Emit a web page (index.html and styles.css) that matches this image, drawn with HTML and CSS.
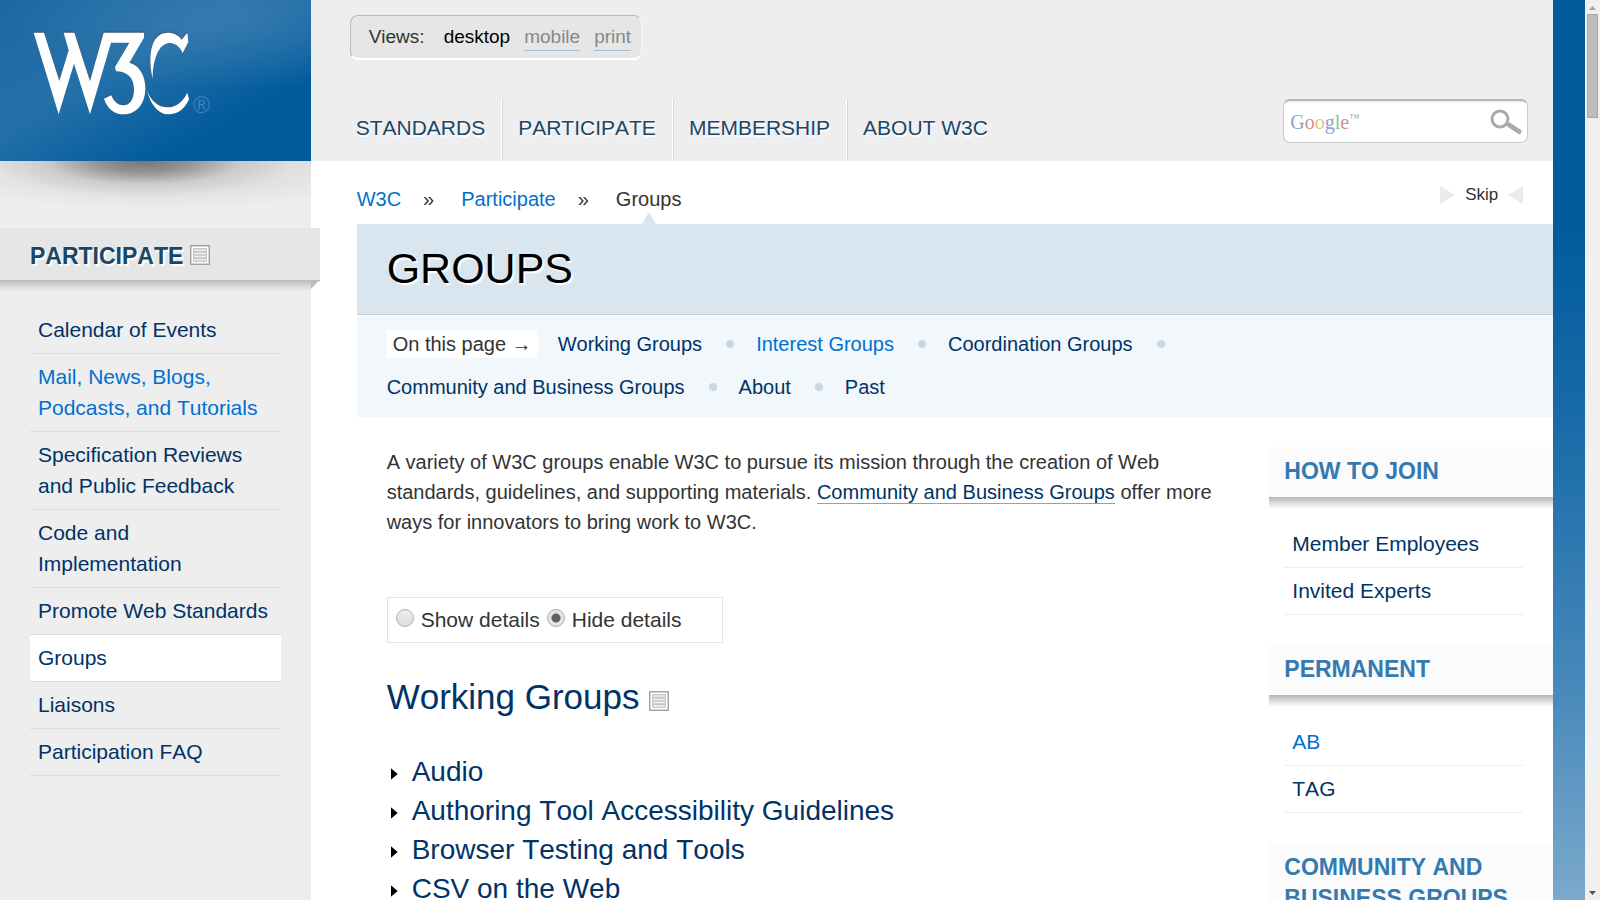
FILE: index.html
```html
<!DOCTYPE html>
<html lang="en">
<head>
<meta charset="utf-8">
<title>Groups - W3C</title>
<link rel="stylesheet" href="styles.css">
</head>
<body>
<svg class="defs" aria-hidden="true">
  <symbol id="doc" viewBox="0 0 20 20">
    <rect x="0.75" y="0.75" width="18.500" height="18.500" fill="#fff" stroke="#999" stroke-width="1.3"/>
    <rect x="3" y="3" width="14" height="14" rx="1" fill="#c6c6c6"/>
    <path d="M4 5h12M4 8.500h12M4 11.500h12M4 15h12" stroke="#f0f0f0" stroke-width="1.5"/>
  </symbol>
</svg>
<div class="viewport">
  <div class="page">
    <div class="side">
      <a class="brand" href="#" aria-label="W3C">
        <svg class="logo" viewBox="96 89 540 258" aria-hidden="true">
          <g class="logo-shape">
            <path d="M101 97H132L178 242L206 150L191 97H223L270 243L311 97H432V112L388 187C418 195 436 225 436 264C436 310 410 342 372 342C344 342 322 326 312 295L334 285C342 305 354 315 370 315C390 315 402 295 402 268C402 232 382 213 348 213L345 200L388 127H333L270 342L222 190L176 342Z"/>
            <path d="M458 235C440 150 460 97 503 97C522 97 536 105 545 118L562 97L565 125L548 158C538 135 522 128 508 128C475 130 458 180 458 235Z"/>
            <path d="M441 268C450 300 475 321 503 321C530 321 550 302 562 277L567 297C555 325 535 342 505 342C475 342 450 310 441 268Z"/>
          </g>
        </svg>
        <span class="reg">®</span>
      </a>
      <div class="brand-shadow"></div>
      <h2 class="side-title"><a href="#">PARTICIPATE</a> <svg class="doc"><use href="#doc"/></svg></h2>
      <ul class="links side-links">
        <li><a href="#">Calendar of Events</a></li>
        <li><a class="fresh" href="#">Mail, News, Blogs, Podcasts, and Tutorials</a></li>
        <li><a href="#">Specification Reviews and Public Feedback</a></li>
        <li><a href="#">Code and Implementation</a></li>
        <li><a href="#">Promote Web Standards</a></li>
        <li class="current"><a href="#">Groups</a></li>
        <li><a href="#">Liaisons</a></li>
        <li><a href="#">Participation FAQ</a></li>
      </ul>
    </div>
    <div class="content">
      <header class="top">
        <div class="views"><span>Views:</span><a class="on" href="#">desktop</a><a href="#">mobile</a><a href="#">print</a></div>
        <div class="bar">
          <nav class="menu">
            <a href="#">STANDARDS</a><a href="#">PARTICIPATE</a><a href="#">MEMBERSHIP</a><a href="#">ABOUT W3C</a>
          </nav>
          <form class="search">
            <label class="google" for="q"><b class="g-blue">G</b><b class="g-red">o</b><b class="g-gold">o</b><b class="g-blue">g</b><b class="g-green">l</b><b class="g-red">e</b><sup>™</sup></label>
            <input id="q" type="text">
            <button type="button" aria-label="Search">
              <svg viewBox="0 0 32 26"><circle cx="10" cy="10" r="8" fill="none" stroke="#aaa" stroke-width="3"/><path d="M16 14.500L20 17" stroke="#aaa" stroke-width="3"/><path d="M20 16.500L29 22.500" stroke="#aaa" stroke-width="5" stroke-linecap="round"/></svg>
            </button>
          </form>
        </div>
      </header>
      <div class="trail">
        <nav class="crumbs"><a href="#">W3C</a><i>»</i><a href="#">Participate</a><i>»</i><span>Groups</span></nav>
        <a class="skip" href="#main"><svg viewBox="0 0 15 18"><path d="M0 0L15 9L0 18Z" fill="#ebebeb"/></svg>Skip<svg viewBox="0 0 15 18"><path d="M15 0L0 9L15 18Z" fill="#ebebeb"/></svg></a>
      </div>
      <div class="inner">
        <h1>GROUPS</h1>
        <ul class="jump">
          <li class="label">On this page →</li>
          <li><a href="#">Working Groups</a></li>
          <li><a class="fresh" href="#">Interest Groups</a></li>
          <li><a href="#">Coordination Groups</a></li>
          <li><a href="#">Community and Business Groups</a></li>
          <li><a href="#">About</a></li>
          <li class="last"><a href="#">Past</a></li>
        </ul>
        <div class="columns">
          <main id="main">
            <p>A variety of W3C groups enable W3C to pursue its mission through the creation of Web standards, guidelines, and supporting materials. <a href="#">Community and Business Groups</a> offer more ways for innovators to bring work to W3C.</p>
            <form class="toggle">
              <input type="radio" name="d" id="show"><label for="show">Show details</label>
              <input type="radio" name="d" id="hide" checked><label for="hide">Hide details</label>
            </form>
            <h2 class="section"><a href="#">Working Groups</a> <svg class="doc"><use href="#doc"/></svg></h2>
            <ul class="groups">
              <li><a href="#">Audio</a></li>
              <li><a href="#">Authoring Tool Accessibility Guidelines</a></li>
              <li><a href="#">Browser Testing and Tools</a></li>
              <li><a href="#">CSV on the Web</a></li>
            </ul>
          </main>
          <aside>
            <h2>HOW TO JOIN</h2>
            <ul class="links">
              <li><a href="#">Member Employees</a></li>
              <li><a href="#">Invited Experts</a></li>
            </ul>
            <h2>PERMANENT</h2>
            <ul class="links">
              <li><a class="fresh" href="#">AB</a></li>
              <li><a href="#">TAG</a></li>
            </ul>
            <h2>COMMUNITY AND BUSINESS GROUPS</h2>
          </aside>
        </div>
      </div>
    </div>
  </div>
</div>
<div class="scroll" aria-hidden="true">
  <svg viewBox="0 0 7 4"><path d="M0 4L3.500 0L7 4Z" fill="#a3a3a3"/></svg>
  <div class="thumb"></div>
  <svg viewBox="0 0 7 4"><path d="M0 0L3.500 4L7 0Z" fill="#505050"/></svg>
</div>
</body>
</html>
```
FILE: styles.css
```css
* { box-sizing: border-box; }
body {
  margin: 0;
  display: flex;
  height: 100vh;
  overflow: hidden;
  font-family: "Liberation Sans", Arial, sans-serif;
  font-size: 20px;
  font-kerning: none;
  line-height: 30px;
  color: #333;
}
h1, h2, p, ul { margin: 0; padding: 0; }
ul { list-style: none; }
a { color: #036; text-decoration: none; }
a.fresh { color: #0070d0; }
.defs { position: absolute; width: 0; height: 0; }
.doc { width: 20px; height: 20px; }

.viewport {
  flex: 1;
  min-width: 0;
  overflow: hidden;
  background: linear-gradient(#005a9c 24%, #1b6ca8 48%, #4587ba 75%, #7aa9cb);
}
.page { display: flex; width: 98%; min-height: 100%; background: #fff; }

/* Left column */
.side { width: 20%; flex: none; background: #eee; }
.brand {
  display: flex;
  align-items: flex-start;
  height: 161px;
  padding: 30px 0 0 32px;
  background:
    radial-gradient(ellipse 220px 70px at 230px 20px, rgba(70, 132, 182, .55), transparent),
    linear-gradient(152deg, #1c68a4, #2570a9 40%, #005a9c 76%);
}
.logo { width: 180px; height: 86px; flex: none; }
.logo-shape { fill: #fff; filter: drop-shadow(0 -4px 1px #41586d); }
.reg { margin: 60px 0 0 -19px; font-size: 23px; color: #3d80b5; }
.brand-shadow {
  height: 67px;
  background:
    radial-gradient(ellipse 150px 36px at 46% 0, #777, rgba(130, 130, 130, .8) 30%, rgba(190, 190, 190, .5) 65%, transparent),
    radial-gradient(ellipse 250px 50px at 50% 0, #ccc, #eee);
}
.side-title {
  position: relative;
  margin-right: -9px;
  height: 53px;
  padding: 12px 0 0 30px;
  background: #e6e6e6;
  border-bottom: 1px solid #aaa;
  font-size: 23px;
  line-height: 32px;
}
.side-title a { color: #1a4767; text-shadow: 2px 2px 1px #fff; }
.side-title .doc { vertical-align: -1px; }
.side-title::before {
  content: "";
  position: absolute;
  left: 0;
  right: 9px;
  top: 100%;
  height: 11px;
  background: linear-gradient(#bbb, #eee);
}
.side-title::after {
  content: "";
  position: absolute;
  right: 0;
  top: 100%;
  width: 9px;
  height: 9px;
  background: #bbb;
  clip-path: polygon(0 0, 100% 0, 0 100%);
}
.links { font-size: 21px; line-height: 31px; }
.links li { padding: 7px 8px 8px; border-bottom: 1px solid #eee; }
.side-links { margin: 26px 30px 0; }
.side-links li { border-color: #dcdcdc; }
.side-links .current { background: #fff; }

/* Header */
.content { flex: 1; min-width: 0; }
.top {
  display: flex;
  flex-direction: column;
  justify-content: space-between;
  height: 161px;
  padding: 15px 25px 0 39px;
  background: #eee;
}
.views {
  display: flex;
  align-self: flex-start;
  align-items: flex-start;
  gap: 14px;
  height: 45px;
  padding: 8px 10px 0 18px;
  border: 1px solid #bbb;
  border-right-color: #f6f6f6;
  border-bottom: 2px solid #fff;
  border-radius: 8px;
  background: #e6e6e6;
  font-size: 19px;
  line-height: 26px;
}
.views span { margin-right: 5px; }
.views a { color: #888; border-bottom: 1px solid #a5bfd2; }
.views .on { color: #000; border: 0; }
.bar { display: flex; justify-content: space-between; }
.menu { display: flex; margin-left: -10px; }
.menu a {
  padding: 13px 16px 17px 15px;
  border-left: 1px solid #d9d9d9;
  border-right: 1px solid #fff;
  color: #1a4767;
  font-size: 21px;
  line-height: 32px;
  text-shadow: 1px 2px 1px #fff;
}
.menu a:first-child { border-left: 0; padding-left: 16px; }
.menu a:last-child { border-right: 0; }
.search {
  display: flex;
  align-items: center;
  width: 245px;
  height: 44px;
  padding: 0 5px 0 6px;
  border: 1px solid #ccc;
  border-top: 2px solid #b4b4b4;
  border-radius: 7px;
  background: linear-gradient(#ededed, #fff 3px);
}
.google { font-family: "Liberation Serif", serif; font-size: 20px; line-height: 24px; }
.google b { font-weight: 400; }
.google sup { font-size: 10px; line-height: 1px; color: #999; }
.g-blue { color: #8ea2d2; }
.g-red { color: #d88f8f; }
.g-gold { color: #dfc880; }
.g-green { color: #8abf8a; }
.search input { flex: 1; min-width: 0; border: 0; background: none; }
.search button { padding: 0; border: 0; background: none; }
.search button svg { display: block; width: 32px; height: 26px; }

/* Breadcrumb row */
.trail {
  display: flex;
  justify-content: space-between;
  height: 63px;
  padding: 19px 30px 0 46px;
}
.crumbs { display: flex; align-items: flex-start; padding-top: 4px; }
.crumbs a { color: #0070d0; }
.crumbs i { font-style: normal; margin: 0 27px 0 22px; }
.crumbs span { position: relative; height: 40px; }
.crumbs span::after {
  content: "";
  position: absolute;
  left: 50%;
  bottom: 0;
  margin-left: -7px;
  border: 7px solid transparent;
  border-top: 0;
  border-bottom: 12px solid #dae6ef;
}
.skip { display: flex; align-items: center; gap: 10px; height: 30px; color: #333; font-size: 17px; }
.skip svg { width: 15px; height: 18px; }

/* Page title and jump list */
.inner { padding-left: 46px; }
h1 {
  padding: 19px 30px 21px;
  border-bottom: 1px solid #c2d2de;
  background: #dae6ef;
  color: #000;
  font-size: 43px;
  font-weight: 400;
  line-height: 50px;
  text-shadow: 2px 2px 1px #fff;
}
.jump {
  display: flex;
  flex-wrap: wrap;
  row-gap: 15px;
  padding: 14px 300px 16px 30px;
  border-top: 1px solid #fff;
  background: #f1f7fb;
  line-height: 28px;
}
.jump li { display: flex; align-items: center; margin-right: 22px; }
.jump li::after {
  content: "";
  width: 8px;
  height: 8px;
  margin-left: 24px;
  border-radius: 50%;
  background: #c9d8e3;
}
.jump .label { margin-right: 20px; padding: 0 6px; background: #fff; }
.jump .label::after, .jump .last::after { display: none; }

/* Columns */
.columns { display: flex; gap: 30px; padding: 30px 0 0 30px; }
main { flex: 1; min-width: 0; }
main p a { border-bottom: 1px solid #8aa4bb; }
.toggle {
  display: flex;
  align-items: center;
  width: 336px;
  height: 46px;
  margin-top: 60px;
  padding-left: 8px;
  border: 1px solid #dae6ef;
  font-size: 21px;
}
.toggle input {
  appearance: none;
  width: 18px;
  height: 18px;
  margin: 0 7px 4px 0;
  border: 1px solid #b0b0b0;
  border-radius: 50%;
  background: linear-gradient(#eee, #dcdcdc);
}
.toggle input:checked { background: radial-gradient(#606060 4px, #e4e4e4 5px); }
.toggle label { margin-right: 7px; }
.section { margin-top: 34px; font-size: 35px; font-weight: 400; line-height: 40px; }
.section .doc { vertical-align: -2px; }
.groups { margin-top: 35px; font-size: 28px; line-height: 39px; }
.groups li { display: flex; align-items: center; }
.groups li::before {
  content: "";
  width: 7px;
  height: 12px;
  margin: 5px 14px 0 4px;
  background: #000;
  clip-path: polygon(0 0, 100% 50%, 0 100%);
}
aside { width: 284px; flex: none; }
aside h2 {
  position: relative;
  margin-bottom: 24px;
  padding: 9px 15px 10px;
  background: #fbfbfb;
  color: #337ab0;
  font-size: 23px;
  line-height: 31px;
}
aside h2::after {
  content: "";
  position: absolute;
  left: 0;
  right: 0;
  top: 100%;
  height: 12px;
  background: linear-gradient(#b5b5b5, #ddd 50%, #fff);
}
aside ul { margin: 0 30px 30px 15px; }

/* Scroll track */
.scroll {
  display: flex;
  flex-direction: column;
  align-items: center;
  width: 15px;
  padding: 6px 0 5px;
  background: #f0f0f0;
}
.scroll svg { width: 7px; height: 4px; }
.thumb {
  width: 11px;
  height: 104px;
  margin: 4px 0 auto;
  border: 1px solid #a8a8a8;
  background: #bcbcbc;
}
```
